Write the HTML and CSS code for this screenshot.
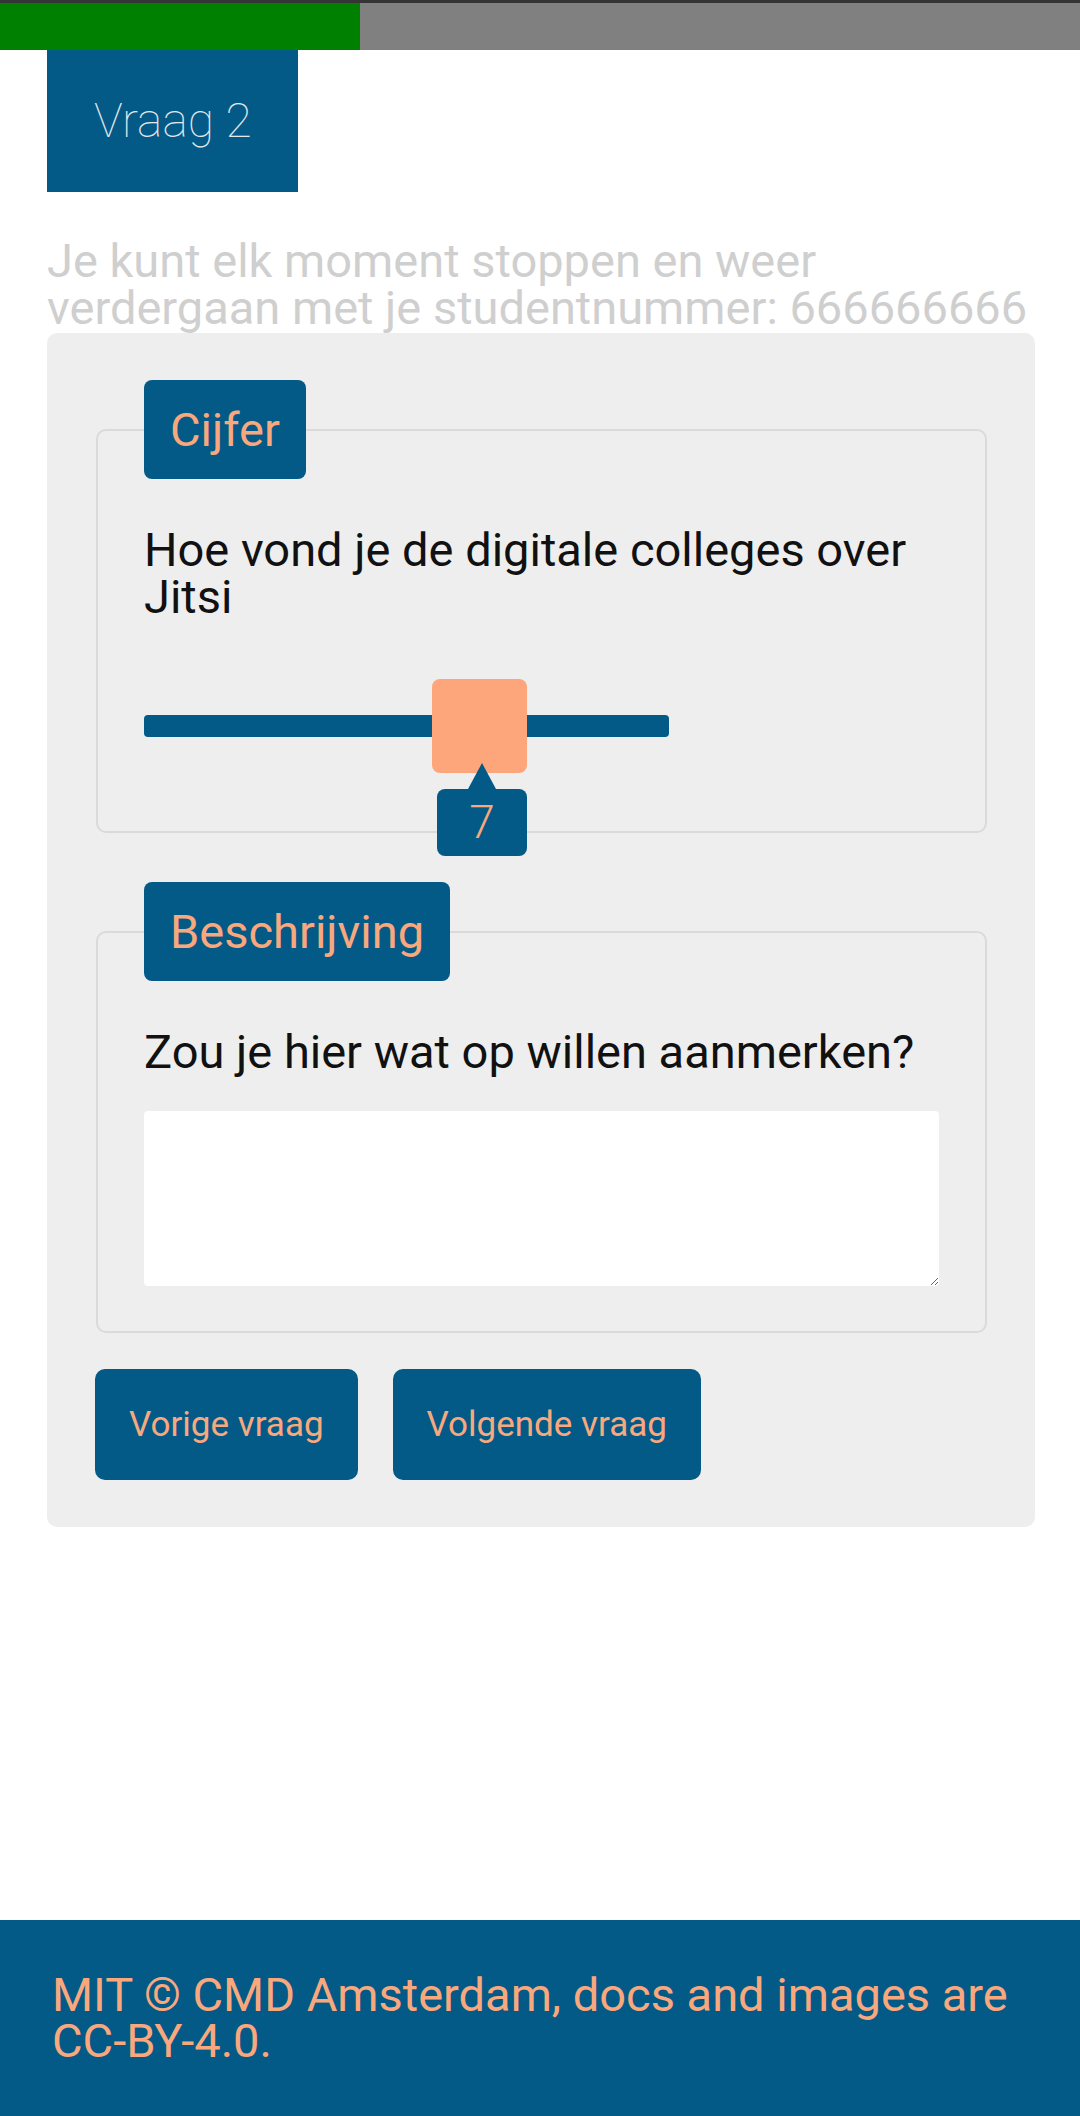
FILE: index.html
```html
<!DOCTYPE html>
<html lang="nl">
<head>
<meta charset="utf-8">
<title>Vraag 2</title>
<link rel="stylesheet" href="styles.css">
</head>
<body>
<div class="progress"><div class="progress-bar" style="width:33.333%"></div></div>
<main class="page">
  <h1 class="question-tag">Vraag 2</h1>
  <p class="intro">Je kunt elk moment stoppen en weer verdergaan met je studentnummer: 666666666</p>
  <form class="card">
    <fieldset class="group">
      <legend class="group-label">Cijfer</legend>
      <p class="question">Hoe vond je de digitale colleges over Jitsi</p>
      <div class="slider">
        <div class="slider-track"></div>
        <div class="slider-thumb" style="left:288px">
          <div class="slider-tip">7</div>
        </div>
      </div>
    </fieldset>
    <fieldset class="group group-second">
      <legend class="group-label">Beschrijving</legend>
      <p class="question">Zou je hier wat op willen aanmerken?</p>
      <textarea class="answer"></textarea>
    </fieldset>
    <div class="actions">
      <button type="button" class="btn">Vorige vraag</button>
      <button type="button" class="btn">Volgende vraag</button>
    </div>
  </form>
</main>
<footer class="footer">MIT © CMD Amsterdam, docs and images are CC-BY-4.0.</footer>
</body>
</html>
```

FILE: styles.css
```css
html, body {
  margin: 0;
  padding: 0;
}

body {
  min-height: 100vh;
  display: flex;
  flex-direction: column;
  font-family: Roboto, "Noto Sans", "Liberation Sans", sans-serif;
  font-size: 47px;
  line-height: 47px;
  background: #ffffff;
  color: #111111;
}

.progress {
  height: 47px;
  border-top: 3px solid #353535;
  background: #808080;
}

.progress-bar {
  height: 100%;
  background: #008000;
}

.page {
  display: flex;
  flex-direction: column;
}

.question-tag {
  align-self: flex-start;
  margin: 0 0 0 47px;
  padding: 47px 46px 47px 47px;
  background: #045a87;
  color: #e3e8ec;
  font-size: 48px;
  line-height: 48px;
  font-weight: 100;
}

.intro {
  margin: 45px 0 2px 47px;
  max-width: 1000px;
  color: #cfcfcf;
  font-weight: 400;
}

.card {
  margin: 0 45px 0 47px;
  padding: 47px 48px 47px 49px;
  background: #eeeeee;
  border-radius: 10px;
}

.group {
  margin: 0;
  padding: 0 46px 58px;
  border: 2px solid #dadada;
  border-radius: 10px;
  min-width: 0;
}

.group-second {
  margin-top: 49px;
  padding-bottom: 45px;
}

.group-label {
  padding: 26px;
  background: #045a87;
  color: #f9a87e;
  border-radius: 8px;
  font-size: 47px;
  line-height: 47px;
}

.question {
  margin: 47px 0 0;
  color: #111111;
}

.slider {
  position: relative;
  width: 525px;
  height: 94px;
  margin-top: 59px;
  display: flex;
  align-items: center;
}

.slider-track {
  width: 100%;
  height: 22px;
  background: #045a87;
  border-radius: 4px;
}

.slider-thumb {
  position: absolute;
  top: 0;
  width: 95px;
  height: 94px;
  background: #fda67b;
  border-radius: 8px;
}

.slider-tip {
  position: absolute;
  top: 110px;
  left: 5px;
  width: 90px;
  height: 67px;
  background: #045a87;
  color: #f9a87e;
  border-radius: 8px;
  display: flex;
  align-items: center;
  justify-content: center;
  font-size: 46px;
  font-weight: 300;
}

.slider-tip::before {
  content: "";
  position: absolute;
  top: -26px;
  left: 31px;
  border-left: 14px solid transparent;
  border-right: 14px solid transparent;
  border-bottom: 26px solid #045a87;
}

.answer {
  display: block;
  box-sizing: border-box;
  width: 100%;
  height: 175px;
  margin-top: 36px;
  border: 0;
  border-radius: 4px;
  background: #ffffff;
  font-family: inherit;
}

.actions {
  display: flex;
  gap: 35px;
  margin-top: 36px;
  margin-left: -1px;
}

.btn {
  padding: 35px 34px;
  border: 0;
  border-radius: 10px;
  background: #045a87;
  color: #f9a87e;
  font-family: Roboto, "Liberation Sans", sans-serif;
  font-size: 35px;
  line-height: 41px;
}

.footer {
  margin-top: auto;
  padding: 52px 30px 52px 52px;
  background: #045a87;
  color: #f9a87e;
  font-size: 47px;
  line-height: 46px;
}
```
